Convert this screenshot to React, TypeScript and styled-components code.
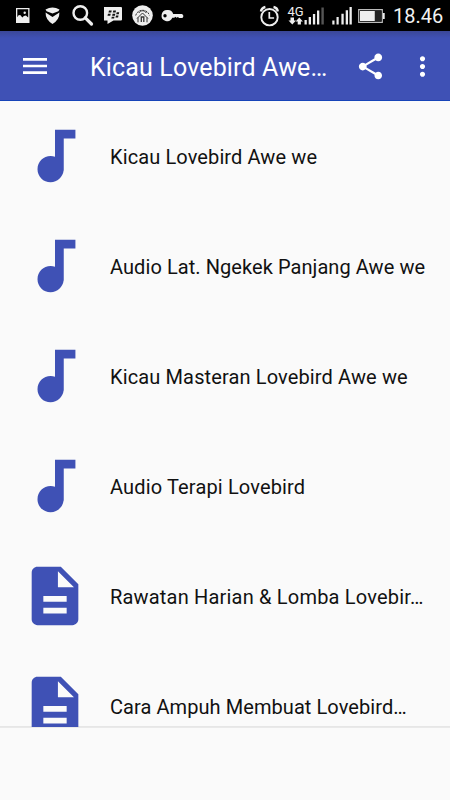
import React from "react";
import styled, { createGlobalStyle } from "styled-components";

const GlobalStyle = createGlobalStyle`
  * { box-sizing: border-box; }
  body { margin: 0; background: #fafafa; font-family: Roboto, "Noto Sans", sans-serif; }
`;

const Screen = styled.div`
  width: 450px;
  height: 800px;
  display: flex;
  flex-direction: column;
  overflow: hidden;
  background: #fafafa;
`;

const StatusBar = styled.header`
  height: 31px;
  flex: none;
  display: flex;
  align-items: center;
  justify-content: space-between;
  background: #000;
`;

const StatusGlyphs = styled.svg<{ $width: number }>`
  display: block;
  width: ${(p) => p.$width}px;
  height: 31px;
`;

const StatusGroup = styled.div`
  display: flex;
  align-items: center;
`;

const Clock = styled.time`
  width: 57px;
  padding-top: 1px;
  color: #f2f2f2;
  font-size: 20px;
  line-height: 31px;
  letter-spacing: 0;
  white-space: nowrap;
`;

const NetworkLabel = styled.text`
  font-family: Roboto, sans-serif;
  font-size: 13px;
  fill: #eee;
`;

const AppBar = styled.nav`
  height: 70px;
  flex: none;
  display: flex;
  align-items: center;
  padding: 0 0 0 15px;
  background: linear-gradient(#3b4798 0, #3f51b5 7px, #3f51b5 100%);
  border-bottom: 1px solid #1744b8;
`;

const IconButton = styled.button<{ $width: number; $drop?: number }>`
  width: ${(p) => p.$width}px;
  height: 60px;
  display: grid;
  place-items: center;
  flex: none;
  padding: ${(p) => p.$drop ?? 0}px 0 0;
  border: 0;
  background: none;
  color: #fff;
`;

const Icon = styled.svg<{ $size: number }>`
  display: block;
  width: ${(p) => p.$size}px;
  height: ${(p) => p.$size}px;
  flex: none;
  fill: currentColor;
`;

const Title = styled.h1`
  margin: 4px 0 0 35px;
  flex: 1;
  color: #fff;
  font-size: 25px;
  font-weight: 400;
  line-height: 34px;
  letter-spacing: 0.15px;
  white-space: nowrap;
`;

const List = styled.ul`
  flex: 1;
  min-height: 0;
  margin: 0;
  padding: 0;
  list-style: none;
  overflow: hidden;
  background: linear-gradient(#e6e6e6, #e6e6e6) bottom / 100% 1px no-repeat;
`;

const Row = styled.li`
  height: 110px;
  display: flex;
  align-items: center;
  gap: 20px;
  padding-left: 20px;
  color: #3f51b5;
`;

const Label = styled.span<{ $spacing: number }>`
  padding-top: 2px;
  color: #111;
  font-size: 20px;
  line-height: 28px;
  letter-spacing: ${(p) => p.$spacing}px;
  white-space: nowrap;
`;

const Footer = styled.footer`
  height: 73px;
  flex: none;
  border-top: 1px solid #e9e9e9;
  background: #fafafa;
`;

const paths = {
  audio:
    "M12 3v9.28c-.47-.17-.97-.28-1.5-.28C8.01 12 6 14.01 6 16.5S8.01 21 10.5 21c2.31 0 4.2-1.75 4.45-4H15V6h4V3h-7z",
  article:
    "M14 2H6c-1.1 0-1.99.9-1.99 2L4 20c0 1.1.89 2 1.99 2H18c1.1 0 2-.9 2-2V8l-6-6zm2 16H8v-2h8v2zm0-4H8v-2h8v2zm-3-5V3.5L18.5 9H13z",
  menu: "M3 18h18v-2H3v2zm0-5h18v-2H3v2zm0-7v2h18V6H3z",
  share:
    "M18 16.08c-.76 0-1.44.3-1.96.77L8.91 12.7c.05-.23.09-.46.09-.7s-.04-.47-.09-.7l7.05-4.11c.54.5 1.25.81 2.04.81 1.66 0 3-1.34 3-3s-1.34-3-3-3-3 1.34-3 3c0 .24.04.47.09.7L8.04 9.81C7.5 9.31 6.79 9 6 9c-1.66 0-3 1.34-3 3s1.34 3 3 3c.79 0 1.5-.31 2.04-.81l7.12 4.16c-.05.21-.08.43-.08.65 0 1.61 1.31 2.92 2.92 2.92s2.92-1.31 2.92-2.92-1.31-2.92-2.92-2.92z",
  more: "M12 8c1.1 0 2-.9 2-2s-.9-2-2-2-2 .9-2 2 .9 2 2 2zm0 2c-1.1 0-2 .9-2 2s.9 2 2 2 2-.9 2-2-.9-2-2-2zm0 6c-1.1 0-2 .9-2 2s.9 2 2 2 2-.9 2-2-.9-2-2-2z",
};

type IconName = keyof typeof paths;

const Glyph = ({ name, size }: { name: IconName; size: number }) => (
  <Icon $size={size} viewBox="0 0 24 24" aria-hidden="true">
    <path d={paths[name]} />
  </Icon>
);

const items: { icon: IconName; label: string; spacing: number }[] = [
  { icon: "audio", label: "Kicau Lovebird Awe we", spacing: 0.11 },
  { icon: "audio", label: "Audio Lat. Ngekek Panjang Awe we", spacing: 0.07 },
  { icon: "audio", label: "Kicau Masteran Lovebird Awe we", spacing: 0.13 },
  { icon: "audio", label: "Audio Terapi Lovebird", spacing: 0.15 },
  { icon: "article", label: "Rawatan Harian & Lomba Lovebir…", spacing: 0.19 },
  { icon: "article", label: "Cara Ampuh Membuat Lovebird…", spacing: 0.07 },
];

const NotificationIcons = () => (
  <StatusGlyphs $width={190} viewBox="0 0 190 31" fill="#eee" aria-hidden="true">
    <path fillRule="evenodd" d="M16 8h13.5v15H16zM17.3 9.3v8l1.2-2 1.7-.3 2.2 2.5 1.5-1.5 2-.4 2.3 2V9.3z" />
    <circle cx="24.7" cy="12.8" r="1.2" />
    <path d="M45.5 9.5Q52.5 5.3 59.5 9.5L58.4 11.2 52.5 13.6 46.6 11.2z" />
    <path d="M45.6 12.6l6.9 4.4 6.9-4.4q.3 7-6.9 11.5-7.2-4.5-6.9-11.5z" />
    <circle cx="80.3" cy="13" r="6.8" fill="none" stroke="#eee" strokeWidth="2.4" />
    <path d="M85.3 17.8l6.2 6.2" stroke="#eee" strokeWidth="3.2" strokeLinecap="round" />
    <path d="M104 7h17q1 0 1 1v11.5q0 1-1 1h-7.5L107.5 24v-3.5H104z" />
    <g fill="#111">
      <path d="M109 10.5h2.7l-.4 2h-2.8zM113.3 10.5h2.7l-.4 2h-2.8zM108 13.7h2.7l-.4 2h-2.8zM112.6 13.7h2.7l-.4 2h-2.8zM116.7 12.2h2.5l-.4 2h-2.6zM116 15.4h2.5l-.4 2h-2.6zM111.8 16.7h2.7l-.4 1.8h-2.8z" />
    </g>
    <circle cx="142.5" cy="15.5" r="10.3" />
    <g fill="none" stroke="#333">
      <path d="M137 18.5l5.5-5.5 5.5 5.5" strokeWidth="1" />
      <path d="M135.7 15.5c1.7-7 12-7 13.7 0" strokeDasharray="2 1" />
      <path d="M138.7 13c2-3 5.7-3 7.7 0M138 17.5v4.8M147 17.5v4.8" />
      <path d="M141.3 22v-5h2.5v5" strokeWidth="1.3" />
    </g>
    <path fillRule="evenodd" d="M167.3 10a5.6 5.6 0 1 0 5 7.8h2l1-1 1.2 1 1.4-.9 1.2 1h3.4l1-2-1.3-2h-9A5.6 5.6 0 0 0 167.3 10zM165 14a1.7 1.7 0 1 1 0 3.4 1.7 1.7 0 0 1 0-3.4z" />
  </StatusGlyphs>
);

const SystemIcons = () => (
  <StatusGlyphs $width={135} viewBox="258 0 135 31" fill="#eee" aria-hidden="true">
    <g fill="none" stroke="#eee">
      <circle cx="269.5" cy="17.2" r="8.2" strokeWidth="1.9" />
      <path d="M269.3 12v6h4.8" strokeWidth="1.7" />
      <path d="M261 11.5c.3-2.5 2-4 4.4-4.5M273.5 7c2.4.5 4 2 4.3 4.5" strokeWidth="2.4" />
    </g>
    <NetworkLabel x="287.5" y="16">4G</NetworkLabel>
    <path d="M290.5 17.5h3.5v3h2l-3.7 4-3.8-4h2zM297.7 24.5h3.2v-3h2l-3.6-4-3.7 4h2.1z" />
    <path d="M304.5 20h2.3v4.5h-2.3zM308.7 17h2.3v7.5h-2.3zM312.9 14h2.3v10.5h-2.3zM317 10.5h2.3v14H317z" />
    <path d="M321.4 7.5h2.4v17h-2.4z" fill="#555" />
    <path d="M332.3 20.5h2.2v4h-2.2zM336.5 17h2.2v7.5h-2.2zM341.4 13.8h2.3v10.7h-2.3zM345.7 10.2h2.3v14.3h-2.3zM349.5 7h2.3v17.5h-2.3z" />
    <path d="M358.7 9.7h23.6v12.6h-23.6z" fill="none" stroke="#bbb" strokeWidth="1.2" />
    <path d="M360 11h14.8v10H360zM382.8 13h1.9v6h-1.9z" />
    <path d="M375 11h6.3v10H375z" fill="#222" />
  </StatusGlyphs>
);

export default function App() {
  return (
    <>
      <GlobalStyle />
      <Screen>
        <StatusBar>
          <NotificationIcons />
          <StatusGroup>
            <SystemIcons />
            <Clock>18.46</Clock>
          </StatusGroup>
        </StatusBar>
        <AppBar>
          <IconButton $width={40} aria-label="Menu">
            <Glyph name="menu" size={32} />
          </IconButton>
          <Title>Kicau Lovebird Awe…</Title>
          <IconButton $width={50} $drop={2} aria-label="Share">
            <Glyph name="share" size={31} />
          </IconButton>
          <IconButton $width={55} $drop={1} aria-label="More options">
            <Glyph name="more" size={31} />
          </IconButton>
        </AppBar>
        <List>
          {items.map((item) => (
            <Row key={item.label}>
              <Glyph name={item.icon} size={70} />
              <Label $spacing={item.spacing}>{item.label}</Label>
            </Row>
          ))}
        </List>
        <Footer />
      </Screen>
    </>
  );
}
